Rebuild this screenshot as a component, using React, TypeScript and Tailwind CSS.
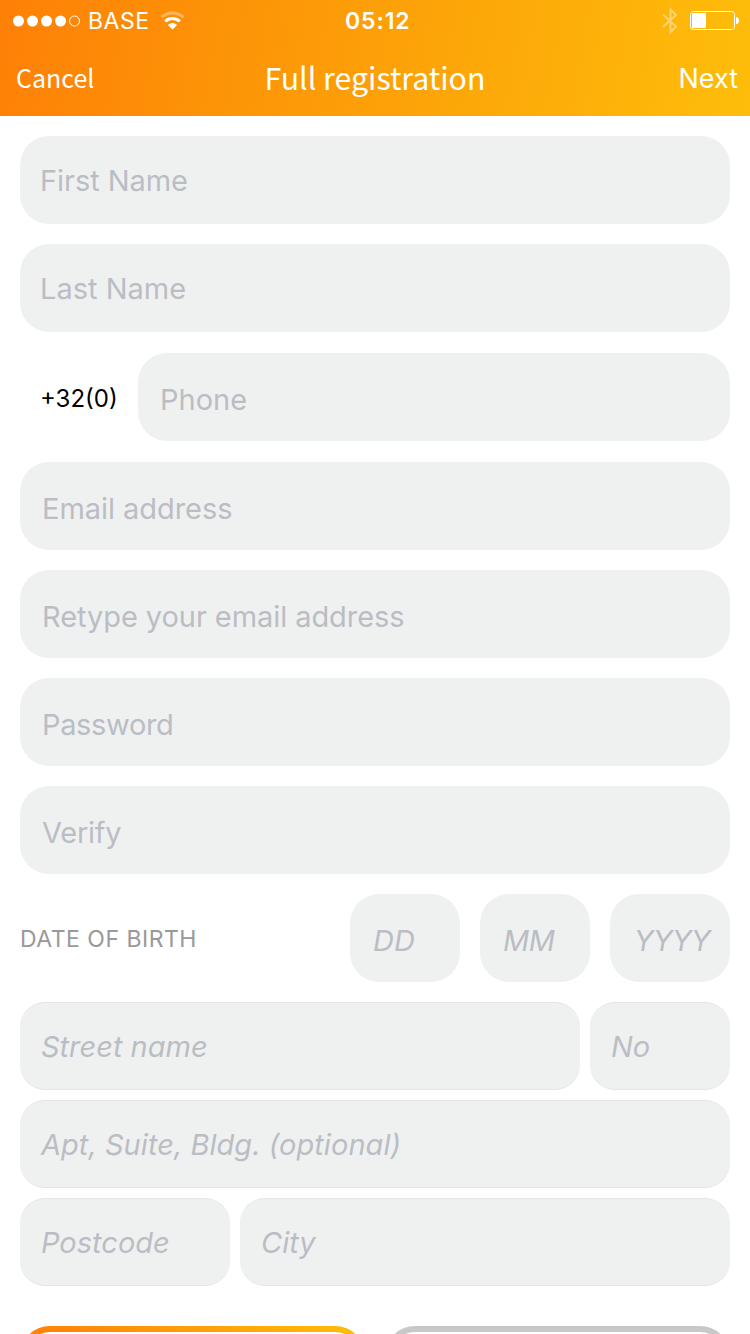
import React from "react";

const ui = "font-['Inter','Liberation_Sans',sans-serif]";
const brand = "font-['Noto_Sans_CJK_SC','Noto_Sans',sans-serif]";

function Field({ label, box, text }: { label: string; box: string; text: string }) {
  return (
    <div className={`flex h-[88px] items-center bg-[#eff1f1] ${box}`}>
      <span className={`text-[29px] leading-[36px] whitespace-nowrap text-[#bbbdc4] ${text}`}>{label}</span>
    </div>
  );
}

const rounded = "rounded-[29px]";
const lined = "rounded-[25px] border-y border-[#e4e6e6]";

function StatusBar() {
  return (
    <div className="flex h-10 items-center pt-px text-white">
      <svg className="ml-[12px] shrink-0" width="70" height="14" viewBox="0 0 70 14">
        <circle cx="6.5" cy="7" r="5.5" fill="white" />
        <circle cx="20.5" cy="7" r="5.5" fill="white" />
        <circle cx="34.5" cy="7" r="5.5" fill="white" />
        <circle cx="48.5" cy="7" r="5.5" fill="white" />
        <circle cx="62.5" cy="7" r="5" fill="none" stroke="white" strokeWidth="1" />
      </svg>
      <span className="ml-[6px] w-[64px] text-[23px] leading-[28px] tracking-[0.5px]">BASE</span>
      <svg className="ml-[8px] shrink-0" width="26" height="20" viewBox="0 0 26 20">
        <path d="M1.6 6.2 A16 16 0 0 1 23.4 6.2" fill="none" stroke="white" strokeOpacity=".35" strokeWidth="3" />
        <path d="M5.2 10.4 A10.6 10.6 0 0 1 19.8 10.4" fill="none" stroke="white" strokeWidth="3" />
        <path d="M12.5 18.6 L7.8 14 Q12.5 10.2 17.2 14 Z" fill="white" />
      </svg>
      <span className="ml-[159px] w-[80px] text-[23px] leading-[28px] font-semibold tracking-[0.9px]">05:12</span>
      <svg className="ml-auto mr-[12px] shrink-0" width="16" height="28" viewBox="0 0 16 28">
        <path d="M1 7.5 L14 19.5 L8.5 25 V2.5 L14 8 L1 20" fill="none" stroke="white" strokeOpacity=".42" strokeWidth="2" />
      </svg>
      <svg className="mr-[11px] shrink-0" width="49" height="20" viewBox="0 0 49 20">
        <rect x=".5" y=".5" width="44" height="18" rx="3" fill="none" stroke="white" />
        <rect x="2" y="2" width="14" height="15" rx="1" fill="white" />
        <path d="M46 6 Q49 6 49 9.5 Q49 13 46 13 Z" fill="white" />
      </svg>
    </div>
  );
}

export default function App() {
  return (
    <div className={`flex h-[1334px] w-[750px] flex-col overflow-hidden bg-white ${ui}`}>
      <header className="flex h-[116px] shrink-0 flex-col bg-[linear-gradient(100deg,#fe8006_0%,#fca008_50%,#febd0a_100%)]">
        <StatusBar />
        <div className="grid h-[76px] grid-cols-[1fr_auto_1fr] items-center text-white">
          <span className={`ml-[16px] pb-[2px] text-[25px] leading-[36px] ${brand}`}>Cancel</span>
          <span className={`pb-[2px] text-[30.3px] leading-[44px] ${brand}`}>Full registration</span>
          <span className="mr-[12px] pt-[2px] text-right text-[27px] leading-[36px]">Next</span>
        </div>
      </header>

      <main className="flex shrink-0 flex-col px-5 pt-5">
        <Field label="First Name" box={rounded} text="ml-[20px] pt-px tracking-[-0.05px]" />
        <Field label="Last Name" box={`mt-5 ${rounded}`} text="ml-[20px] pt-px" />
        <div className="mt-[21px] flex">
          <div className="flex w-[118px] items-center pl-5 pt-[3px]">
            <span className="text-[24px] leading-[30px] text-black">+32(0)</span>
          </div>
          <Field label="Phone" box={`flex-1 ${rounded}`} text="ml-[22px] pt-[5px]" />
        </div>
        <Field label="Email address" box={`mt-[21px] ${rounded}`} text="ml-[22px] pt-[5px] tracking-[-0.05px]" />
        <Field label="Retype your email address" box={`mt-5 ${rounded}`} text="ml-[22px] pt-[5px] tracking-[-0.07px]" />
        <Field label="Password" box={`mt-5 ${rounded}`} text="ml-[22px] pt-[5px] tracking-[-0.35px]" />
        <Field label="Verify" box={`mt-5 ${rounded}`} text="ml-[22px] pt-[5px] tracking-[-0.25px]" />
        <div className="mt-5 flex items-center gap-5">
          <span className="flex-1 pt-[2px] text-[23px] leading-[30px] tracking-[0.5px] text-[#999999]">DATE OF BIRTH</span>
          <Field label="DD" box={`w-[110px] ${rounded}`} text="ml-[23px] pt-[5px] italic" />
          <Field label="MM" box={`w-[110px] ${rounded}`} text="ml-[23px] pt-[5px] italic tracking-[-0.4px]" />
          <Field label="YYYY" box={`w-[120px] ${rounded}`} text="ml-[24px] pt-[5px] italic tracking-[-0.7px]" />
        </div>
        <div className="mt-5 flex gap-2.5">
          <Field label="Street name" box={`flex-1 ${lined}`} text="ml-[21px] pt-px italic" />
          <Field label="No" box={`w-[140px] ${lined}`} text="ml-[21px] pt-px italic" />
        </div>
        <Field label="Apt, Suite, Bldg. (optional)" box={`mt-2.5 ${lined}`} text="ml-[21px] pt-px italic tracking-[0.04px]" />
        <div className="mt-2.5 flex gap-2.5">
          <Field label="Postcode" box={`w-[210px] ${lined}`} text="ml-[21px] pt-px italic" />
          <Field label="City" box={`flex-1 ${lined}`} text="ml-[21px] pt-px italic" />
        </div>
        <div className="mt-10 flex justify-between">
          <div className="h-[88px] w-[345px] rounded-[30px] bg-[linear-gradient(90deg,#ff7f05,#febd0a)] p-[6px]">
            <div className="h-full rounded-[24px] bg-white" />
          </div>
          <div className="h-[88px] w-[345px] rounded-[30px] border-[6px] border-[#c8c8c8] bg-white" />
        </div>
      </main>
    </div>
  );
}
